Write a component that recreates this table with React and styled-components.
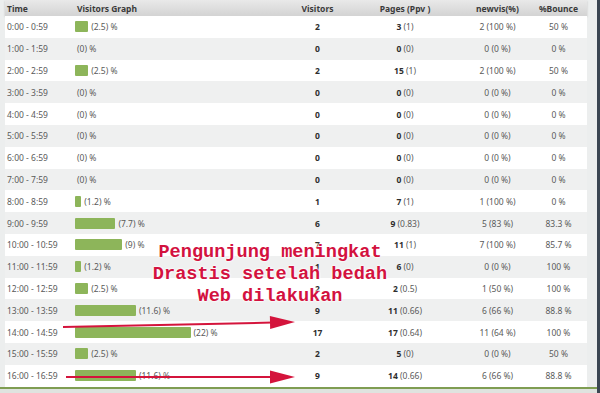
import React from "react";
import styled, { createGlobalStyle } from "styled-components";

const GlobalStyle = createGlobalStyle`
  html, body {
    margin: 0;
    padding: 0;
    background: #eceeee;
  }
`;

const rows = [
  { time: "0:00 - 0:59", pct: 2.5, vis: 2, pages: 3, ppv: "1", nv: "2 (100 %)", bounce: "50 %" },
  { time: "1:00 - 1:59", pct: 0, vis: 0, pages: 0, ppv: "0", nv: "0 (0 %)", bounce: "0 %" },
  { time: "2:00 - 2:59", pct: 2.5, vis: 2, pages: 15, ppv: "1", nv: "2 (100 %)", bounce: "50 %" },
  { time: "3:00 - 3:59", pct: 0, vis: 0, pages: 0, ppv: "0", nv: "0 (0 %)", bounce: "0 %" },
  { time: "4:00 - 4:59", pct: 0, vis: 0, pages: 0, ppv: "0", nv: "0 (0 %)", bounce: "0 %" },
  { time: "5:00 - 5:59", pct: 0, vis: 0, pages: 0, ppv: "0", nv: "0 (0 %)", bounce: "0 %" },
  { time: "6:00 - 6:59", pct: 0, vis: 0, pages: 0, ppv: "0", nv: "0 (0 %)", bounce: "0 %" },
  { time: "7:00 - 7:59", pct: 0, vis: 0, pages: 0, ppv: "0", nv: "0 (0 %)", bounce: "0 %" },
  { time: "8:00 - 8:59", pct: 1.2, vis: 1, pages: 7, ppv: "1", nv: "1 (100 %)", bounce: "0 %" },
  { time: "9:00 - 9:59", pct: 7.7, vis: 6, pages: 9, ppv: "0.83", nv: "5 (83 %)", bounce: "83.3 %" },
  { time: "10:00 - 10:59", pct: 9, vis: 7, pages: 11, ppv: "1", nv: "7 (100 %)", bounce: "85.7 %" },
  { time: "11:00 - 11:59", pct: 1.2, vis: 1, pages: 6, ppv: "0", nv: "0 (0 %)", bounce: "100 %" },
  { time: "12:00 - 12:59", pct: 2.5, vis: 2, pages: 2, ppv: "0.5", nv: "1 (50 %)", bounce: "100 %" },
  { time: "13:00 - 13:59", pct: 11.6, vis: 9, pages: 11, ppv: "0.66", nv: "6 (66 %)", bounce: "88.8 %" },
  { time: "14:00 - 14:59", pct: 22, vis: 17, pages: 17, ppv: "0.64", nv: "11 (64 %)", bounce: "100 %" },
  { time: "15:00 - 15:59", pct: 2.5, vis: 2, pages: 5, ppv: "0", nv: "0 (0 %)", bounce: "50 %" },
  { time: "16:00 - 16:59", pct: 11.6, vis: 9, pages: 14, ppv: "0.66", nv: "6 (66 %)", bounce: "88.8 %" },
];

const cols = "70px 215px 55px 120px 65px 57px";

const Page = styled.div`
  position: relative;
  width: 600px;
  height: 393px;
  overflow: hidden;
  display: flex;
  flex-direction: column;
  background: #eceeee;
  border-right: 3px solid #3b4652;
  box-sizing: border-box;
  font-family: "Noto Sans", "DejaVu Sans", sans-serif;
`;

const Table = styled.div`
  width: 582px;
  margin-left: 5px;
  display: flex;
  flex-direction: column;
`;

const HeaderRow = styled.div`
  display: grid;
  grid-template-columns: ${cols};
  height: 16px;
  align-items: center;
  background: linear-gradient(#e9e9e9, #d3d3d3);
  box-shadow: 0 1px 2px rgba(0, 0, 0, 0.18);
  font-size: 8.5px;
  font-weight: bold;
  color: #3a3a3a;
`;

const HeadCell = styled.div`
  text-align: ${(p) => (p.left ? "left" : "center")};
  padding-left: ${(p) => (p.left ? "2px" : "0")};
  white-space: nowrap;
`;

const Row = styled.div`
  display: grid;
  grid-template-columns: ${cols};
  height: 21.8px;
  align-items: center;
  background: ${(p) => (p.even ? "#ffffff" : "#eff0f0")};
  font-size: 8.5px;
  color: #5a5a5a;
`;

const Cell = styled.div`
  text-align: ${(p) => (p.left ? "left" : "center")};
  padding-left: ${(p) => (p.left ? "2px" : "0")};
  white-space: nowrap;
`;

const GraphCell = styled.div`
  display: flex;
  align-items: center;
  gap: 3px;
  padding-left: ${(p) => (p.empty ? "2px" : "0")};
  white-space: nowrap;
`;

const Bar = styled.span`
  display: inline-block;
  height: 11px;
  background: #8db55a;
  border-radius: 1px;
`;

const Strong = styled.b`
  color: #2e2e2e;
`;

const Footer = styled.div`
  margin-top: auto;
  height: 5px;
  border-top: 2px solid #7f9d52;
  background: #dfe3df;
`;

const Note = styled.div`
  position: absolute;
  left: 120px;
  top: 242px;
  width: 300px;
  text-align: center;
  font-family: "Liberation Mono", "Courier New", monospace;
  font-weight: bold;
  font-size: 18.6px;
  line-height: 22px;
  color: #d3123f;
  text-shadow: 0 0 2px #fff, 0 0 2px #fff, 0 0 3px #fff;
`;

const Arrows = styled.svg`
  position: absolute;
  left: 0;
  top: 0;
  pointer-events: none;
`;

function Arrow({ x1, y1, x2, y2 }) {
  const ang = Math.atan2(y2 - y1, x2 - x1);
  const len = 25;
  const half = 6.5;
  const bx = x2 - Math.cos(ang) * len;
  const by = y2 - Math.sin(ang) * len;
  const px = -Math.sin(ang) * half;
  const py = Math.cos(ang) * half;
  return (
    <g fill="#d4143c" stroke="#d4143c">
      <line x1={x1} y1={y1} x2={bx + 2} y2={by} strokeWidth="2" />
      <polygon
        points={`${x2},${y2} ${bx + px},${by + py} ${bx - px},${by - py}`}
        stroke="none"
      />
    </g>
  );
}

export default function App() {
  return (
    <>
      <GlobalStyle />
      <Page>
        <Table>
          <HeaderRow>
            <HeadCell left>Time</HeadCell>
            <HeadCell left>Visitors Graph</HeadCell>
            <HeadCell>Visitors</HeadCell>
            <HeadCell>Pages (Ppv )</HeadCell>
            <HeadCell>newvis(%)</HeadCell>
            <HeadCell>%Bounce</HeadCell>
          </HeaderRow>
          {rows.map((r, i) => (
            <Row key={r.time} even={i % 2 === 0}>
              <Cell left>{r.time}</Cell>
              <GraphCell empty={r.pct === 0}>
                {r.pct > 0 && <Bar style={{ width: `${Math.max(5, r.pct * 5.25)}px` }} />}
                <span>({r.pct}) %</span>
              </GraphCell>
              <Cell>
                <Strong>{r.vis}</Strong>
              </Cell>
              <Cell>
                <Strong>{r.pages}</Strong> ({r.ppv})
              </Cell>
              <Cell>{r.nv}</Cell>
              <Cell>{r.bounce}</Cell>
            </Row>
          ))}
        </Table>
        <Footer />
        <Note>
          Pengunjung meningkat
          <br />
          Drastis setelah bedah
          <br />
          Web dilakukan
        </Note>
        <Arrows width="600" height="393">
          <Arrow x1={63} y1={327} x2={295} y2={322} />
          <Arrow x1={66} y1={377} x2={295} y2={377} />
        </Arrows>
      </Page>
    </>
  );
}
